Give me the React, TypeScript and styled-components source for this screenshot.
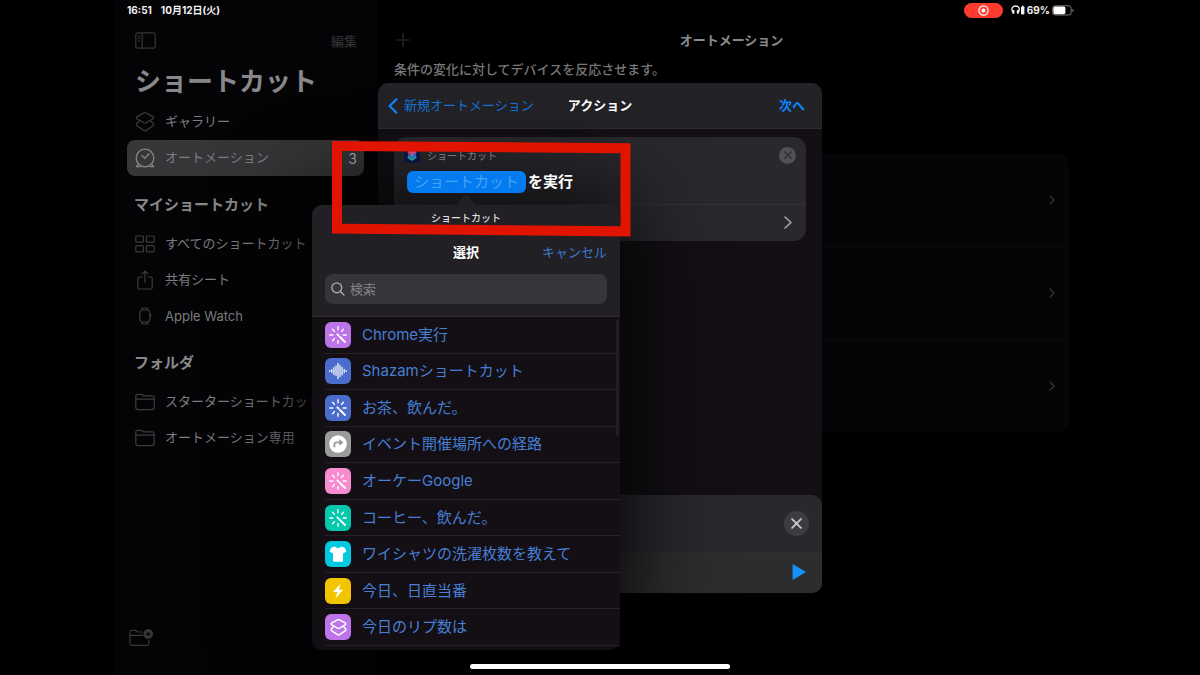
import React from "react";
import styled, { createGlobalStyle } from "styled-components";

const GlobalStyle = createGlobalStyle`
  *, *::before, *::after { box-sizing: border-box; }
  html, body { margin: 0; background: #000; }
  body, button, input {
    font-family: Inter, "Noto Sans CJK JP", sans-serif;
    -webkit-font-smoothing: antialiased;
  }
  button {
    border: 0;
    padding: 0;
    margin: 0;
    background: none;
    color: inherit;
    font-size: inherit;
    text-align: left;
    cursor: pointer;
  }
  h1, h2, p, ul { margin: 0; padding: 0; }
  ul { list-style: none; }
  svg { display: block; flex: none; }
`;

const Page = styled.div`
  position: relative;
  min-height: 100vh;
  display: flex;
  justify-content: center;
  overflow: hidden;
  background: #000;
`;

const Tablet = styled.div`
  width: 100%;
  max-width: 970px;
  display: grid;
  grid-template-columns: 263px 1fr;
  grid-template-rows: 20px 1fr;
`;

const StatusBar = styled.header`
  grid-column: 1 / -1;
  display: flex;
  align-items: center;
  gap: 9px;
  padding: 0 11px 0 12px;
  background: linear-gradient(90deg, #040406 263px, #000 263px);
  color: #f2f2f2;
  font-size: 10px;
  font-weight: 700;
  line-height: 20px;
`;

const StatusRight = styled.div`
  display: flex;
  align-items: center;
  gap: 2px;
  margin-left: auto;
`;

const RecordPill = styled.button`
  display: grid;
  place-items: center;
  width: 39px;
  height: 15px;
  margin-right: 6px;
  border-radius: 8px;
  background: #ff3b30;
`;

const Sidebar = styled.nav`
  display: flex;
  flex-direction: column;
  padding: 0 14px 28px 12px;
  background: #040406;
  color: #737375;
`;

const SidebarTop = styled.div`
  display: flex;
  align-items: center;
  justify-content: space-between;
  height: 40px;
  padding: 0 7px 0 8px;
  color: #363638;
  font-size: 13px;
`;

const AppTitle = styled.h1`
  padding-left: 8px;
  color: #88888a;
  font-size: 26px;
  font-weight: 700;
  line-height: 44px;
`;

const SectionTitle = styled.h2`
  padding: 8px 0 0 7px;
  color: #88888a;
  font-size: 15px;
  font-weight: 700;
  line-height: 42px;
`;

const Label = styled.span`
  padding-bottom: 3px;
`;

const SidebarItem = styled.button<{ $active?: boolean }>`
  display: flex;
  align-items: center;
  gap: 10px;
  width: 100%;
  height: 36px;
  padding: 0 7px 0 8px;
  border-radius: 8px;
  background: ${(p) => (p.$active ? "linear-gradient(90deg, #37373a, #343437)" : "none")};
  color: ${(p) => (p.$active ? "#7d7d80" : "#7c7c7e")};
  font-size: 13px;
  white-space: nowrap;
  overflow: hidden;

  svg { color: ${(p) => (p.$active ? "#88888a" : "#3c3c3f")}; }
`;

const Count = styled.span`
  margin-left: auto;
  color: #a9a9ac;
  font-size: 14px;
`;

const SidebarFooter = styled.button`
  margin: auto auto 0 2px;
  color: #39393c;
`;

const Main = styled.main`
  padding: 0 16px;
  color: #777779;
`;

const MainNav = styled.div`
  display: grid;
  grid-template-columns: 1fr auto 1fr;
  align-items: center;
  height: 40px;
  color: #2b2b2d;
`;

const AddButton = styled.button`
  padding-left: 2px;
`;

const MainTitle = styled.h2`
  padding-bottom: 2px;
  color: #8a8a8c;
  font-size: 13px;
  font-weight: 700;
`;

const Lead = styled.p`
  font-size: 13px;
  font-weight: 500;
  line-height: 18px;
`;

const AutomationList = styled.ul`
  margin-top: 76px;
  border-radius: 10px;
  background: #050507;
`;

const AutomationRow = styled.li`
  & + & { border-top: 1px solid #0b0b0d; }
`;

const AutomationButton = styled.button`
  display: flex;
  align-items: center;
  justify-content: flex-end;
  width: 100%;
  height: 92px;
  padding-right: 14px;
  color: #333336;
`;

const Overlay = styled.div`
  position: absolute;
  inset: 0;
  display: flex;
  justify-content: center;
  padding: 83px 0 82px;
`;

const Dialog = styled.section`
  position: relative;
  display: flex;
  flex-direction: column;
  width: 444px;
  border-radius: 10px;
  background: #130f14;
`;

const DialogHeader = styled.header`
  display: grid;
  grid-template-columns: 1fr auto 1fr;
  align-items: center;
  height: 46px;
  padding: 0 10px;
  border-radius: 10px 10px 0 0;
  border-bottom: 1px solid #2d2c31;
  background: #232227;
  color: #fff;
  font-size: 13px;
`;

const HeaderLink = styled.button<{ $end?: boolean }>`
  display: flex;
  align-items: center;
  gap: 6px;
  justify-self: ${(p) => (p.$end ? "end" : "start")};
  padding-right: 7px;
  color: ${(p) => (p.$end ? "#0a84ff" : "#1673d8")};
  font-size: 13px;
  font-weight: ${(p) => (p.$end ? 700 : 400)};
  white-space: nowrap;

  svg { color: #0a84ff; }
`;

const DialogTitle = styled.h2`
  padding-bottom: 3px;
  color: #fff;
  font-size: 13px;
  font-weight: 700;
`;

const DialogBody = styled.div`
  flex: 1;
  padding: 8px 16px;
`;

const ActionCard = styled.article`
  border-radius: 12px;
  background: #29282d;
`;

const ActionMain = styled.div`
  height: 68px;
  padding: 10px 10px 0;
  border-bottom: 1px solid #333237;
`;

const ActionHead = styled.div`
  display: flex;
  align-items: center;
  gap: 7px;
  height: 16px;
  color: #98989d;
  font-size: 10px;
`;

const RoundButton = styled.button<{ $large?: boolean }>`
  display: grid;
  place-items: center;
  width: ${(p) => (p.$large ? 25 : 17)}px;
  height: ${(p) => (p.$large ? 25 : 17)}px;
  margin-left: auto;
  border-radius: 50%;
  background: ${(p) => (p.$large ? "#3d3c40" : "#515054")};
  color: ${(p) => (p.$large ? "#c8c8ca" : "#262529")};
`;

const Sentence = styled.div`
  display: flex;
  align-items: center;
  gap: 2px;
  margin: 8px 0 0 3px;
  color: #fff;
  font-size: 15px;
  font-weight: 700;
  line-height: 22px;
`;

const SentenceText = styled.span`
  position: relative;
  z-index: 2;
`;

const TokenAnchor = styled.div`
  position: relative;
`;

const Token = styled.button`
  position: relative;
  z-index: 2;
  display: block;
  height: 22px;
  padding: 0 7px;
  border-radius: 6px;
  background: #057bf0;
  color: #45a4f5;
  font-size: 15px;
  line-height: 22px;
  white-space: nowrap;
`;

const ExpandRow = styled.button`
  display: flex;
  align-items: center;
  justify-content: flex-end;
  width: 100%;
  height: 36px;
  padding: 0 14px 2px 0;
  color: #a5a5a8;
`;

const Popover = styled.div`
  position: absolute;
  z-index: 1;
  top: calc(100% + 12px);
  right: -94px;
  left: -95px;
  border-radius: 10px;
  background: #130f14;
  box-shadow: 0 0 90px 10px rgba(0, 0, 0, 0.85);
  font-weight: 400;
`;

const PopoverArrow = styled.svg`
  position: absolute;
  bottom: 100%;
  left: 50%;
  transform: translateX(-50%);
`;

const PopoverHeader = styled.header`
  padding: 0 13px 12px;
  border-radius: 10px 10px 0 0;
  border-bottom: 1px solid #2d2c31;
  background: #222025;
`;

const PopoverTitle = styled.p`
  color: #dededf;
  font-size: 10px;
  font-weight: 500;
  line-height: 26px;
  text-align: center;
`;

const PopoverNav = styled.div`
  display: grid;
  grid-template-columns: 1fr auto 1fr;
  align-items: center;
  height: 43px;
  padding-bottom: 2px;
  color: #fff;
  font-size: 13px;
  font-weight: 700;
`;

const CancelButton = styled.button`
  grid-column: 3;
  justify-self: end;
  color: #3b78cc;
  font-size: 13px;
`;

const PopoverHeading = styled.span`
  grid-column: 2;
`;

const SearchField = styled.label`
  display: flex;
  align-items: center;
  gap: 5px;
  height: 30px;
  padding: 0 6px;
  border-radius: 8px;
  background: #36353b;
  color: #a9a9ad;
`;

const SearchInput = styled.input`
  flex: 1;
  min-width: 0;
  padding: 0 0 1px;
  border: 0;
  outline: 0;
  background: none;
  color: #fff;
  font-size: 13px;

  &::placeholder { color: #858489; opacity: 1; }
`;

const ShortcutList = styled.ul`
  position: relative;
  display: grid;
  grid-auto-rows: 1fr;
  height: 333px;
  padding: 0 0 4px 13px;
`;

const ShortcutRow = styled.li`
  display: flex;
  border-bottom: 1px solid #242227;
`;

const ShortcutButton = styled.button`
  display: flex;
  align-items: center;
  gap: 11px;
  width: 100%;
  color: #477fd4;
  font-size: 15px;
  white-space: nowrap;
`;

const Tile = styled.span<{ $color: string }>`
  display: grid;
  place-items: center;
  width: 26px;
  height: 26px;
  border-radius: 6px;
  background: ${(p) => p.$color};
  color: #fff;
`;

const ScrollThumb = styled.div`
  position: absolute;
  top: 2px;
  right: 1px;
  width: 3px;
  height: 117px;
  border-radius: 2px;
  background: #201e23;
`;

const Tray = styled.footer`
  border-radius: 10px;
  background: #29282d;
  overflow: hidden;
`;

const TrayTop = styled.div`
  display: flex;
  align-items: center;
  height: 57px;
  padding-right: 13px;
`;

const TrayBottom = styled.div`
  display: flex;
  align-items: center;
  justify-content: flex-end;
  height: 41px;
  padding: 0 16px 2px 0;
  border-top: 1px solid #2f2e31;
  background: #2d2d2f;
  color: #0a84ff;
`;

const Marker = styled.svg`
  position: absolute;
  z-index: 3;
  top: 58px;
  left: -46px;
  pointer-events: none;
`;

const HomeIndicator = styled.div`
  position: absolute;
  z-index: 4;
  bottom: 6px;
  left: 50%;
  width: 260px;
  height: 5px;
  border-radius: 3px;
  transform: translateX(-50%);
  background: #fff;
`;

const stroke = {
  fill: "none",
  stroke: "currentColor",
  strokeLinecap: "round" as const,
  strokeLinejoin: "round" as const,
};

const Chevron = ({ w, h, sw }: { w: number; h: number; sw: number }) => (
  <svg width={w} height={h} viewBox={`0 0 ${w} ${h}`} {...stroke} strokeWidth={sw}>
    <path d={`M1 1 L${w - 1} ${h / 2} L1 ${h - 1}`} />
  </svg>
);

const Cross = ({ size, sw }: { size: number; sw: number }) => (
  <svg width={size} height={size} viewBox="0 0 10 10" {...stroke} strokeWidth={sw}>
    <path d="M1 1 L9 9 M9 1 L1 9" />
  </svg>
);

const PanelIcon = () => (
  <svg width="21" height="17" viewBox="0 0 21 17" {...stroke} strokeWidth="1.2">
    <rect x="0.8" y="0.8" width="19.4" height="15.4" rx="2" />
    <path d="M7.2 1v15M3 4h1.8M3 6.5h1.8M3 9h1.8" />
  </svg>
);

const StackIcon = ({ size = 20, sw = 1.2 }: { size?: number; sw?: number }) => (
  <svg width={size} height={size} viewBox="0 0 20 20" {...stroke} strokeWidth={sw}>
    <path d="M8.8 1 Q10 0.4 11.2 1 L17.8 4.6 Q19.4 5.8 17.8 7 L11.2 10.8 Q10 11.4 8.8 10.8 L2.2 7 Q0.6 5.8 2.2 4.6 Z" />
    <path d="M4.6 8.6 L1.8 11.4 Q0.8 12.8 2.2 14 L8.8 18.4 Q10 19.2 11.2 18.4 L17.8 14 Q19.2 12.8 18.2 11.4 L15.4 8.6" />
  </svg>
);

const ClockIcon = () => (
  <svg width="20" height="20" viewBox="0 0 20 20" {...stroke} strokeWidth="1.3">
    <circle cx="10" cy="10" r="8.8" />
    <path d="M6.8 7.4 L9.8 10.4 L14 5.8M3.4 16.2 L1.4 18.6 H5M16.6 16.2 L18.6 18.6 H15" />
  </svg>
);

const GridIcon = () => (
  <svg width="20" height="18" viewBox="0 0 20 18" {...stroke} strokeWidth="1.2">
    <rect x="0.8" y="1" width="7.6" height="6.2" rx="1" />
    <rect x="11.4" y="1" width="7.8" height="6.2" rx="1" />
    <rect x="0.8" y="10.6" width="7.6" height="6.2" rx="1" />
    <rect x="11.4" y="10.6" width="7.8" height="6.2" rx="1" />
  </svg>
);

const ShareIcon = () => (
  <svg width="20" height="20" viewBox="0 0 20 20" {...stroke} strokeWidth="1.2">
    <path d="M7 7H4.4Q2.8 7 2.8 8.6V17.4Q2.8 19 4.4 19H15.6Q17.2 19 17.2 17.4V8.6Q17.2 7 15.6 7H13M10 12.6V1M7 3.8L10 0.8L13 3.8" />
  </svg>
);

const WatchIcon = () => (
  <svg width="20" height="20" viewBox="0 0 20 20" {...stroke} strokeWidth="1.2">
    <rect x="4.8" y="4" width="10" height="12" rx="3" />
    <path d="M6.6 3.8L7.2 2H12.4L13 3.8M6.6 16.2L7.2 18H12.4L13 16.2M15.6 8.4V10.4" />
  </svg>
);

const FolderIcon = () => (
  <svg width="20" height="18" viewBox="0 0 20 18" {...stroke} strokeWidth="1.2">
    <path d="M0.8 14.6V3.4Q0.8 1.4 2.8 1.4H6Q7 1.4 7.6 2L8.4 2.8H17.4Q19.2 2.8 19.2 4.6V14.6Q19.2 16.6 17.2 16.6H2.8Q0.8 16.6 0.8 14.6ZM0.8 6.2H19.2" />
  </svg>
);

const FolderPlusIcon = () => (
  <svg width="24" height="18" viewBox="0 0 24 18" {...stroke} strokeWidth="1.2">
    <path d="M13 3H8.6L7.6 2Q7 1.4 6 1.4H2.8Q1 1.4 1 3.2V14.6Q1 16.4 2.8 16.4H18Q19.8 16.4 19.8 14.6V11M1 6.4H13.6" />
    <circle cx="19.2" cy="5" r="4.2" fill="currentColor" />
    <path d="M19.2 3V7M17.2 5H21.2" stroke="#040406" />
  </svg>
);

const SearchIcon = () => (
  <svg width="14" height="14" viewBox="0 0 14 14" {...stroke} strokeWidth="1.4">
    <circle cx="5.8" cy="5.8" r="4.9" />
    <path d="M9.4 9.4L13 13" />
  </svg>
);

const HeadphonesIcon = () => (
  <svg width="14" height="10" viewBox="0 0 14 10">
    <path d="M1.4 6.6 C0 2.6 2 1 4.6 1 S9.2 2.6 7.8 6.6" fill="none" stroke="currentColor" strokeWidth="1.3" />
    <rect x="1.2" y="5" width="2.2" height="3.8" rx="0.8" fill="currentColor" />
    <rect x="5.8" y="5" width="2.2" height="3.8" rx="0.8" fill="currentColor" />
    <rect x="10" y="1.4" width="3.4" height="8" rx="0.8" fill="currentColor" />
    <rect x="11" y="0.6" width="1.4" height="1.2" fill="currentColor" />
  </svg>
);

const BatteryIcon = () => (
  <svg width="22" height="11" viewBox="0 0 22 11">
    <rect x="0.6" y="0.8" width="18.6" height="9.2" rx="2.6" fill="none" stroke="#7c7c7c" />
    <rect x="1.4" y="1.6" width="12" height="7.6" rx="1.6" fill="#fff" />
    <path d="M20.4 3.8Q21.6 4.4 21.6 5.4T20.4 7Z" fill="#7c7c7c" />
  </svg>
);

const AppIcon = () => (
  <svg width="16" height="16" viewBox="0 0 16 16">
    <rect width="16" height="16" rx="4" fill="#0c1c4c" />
    <path d="M8 7.2 L12.2 9.8 Q12.8 10.4 12.2 11 L8.6 13.6 Q8 14 7.4 13.6 L3.8 11 Q3.2 10.4 3.8 9.8Z" fill="#31c6b5" />
    <path d="M4 6.6 L8 9.8 L12.2 6.6 L12 9.4 L8 12 L4 9.4Z" fill="#3579ea" />
    <path d="M7.4 2.4 Q8 2 8.6 2.4 L12.2 4.8 Q12.8 5.4 12.2 6 L8.6 8.4 Q8 8.8 7.4 8.4 L3.8 6 Q3.2 5.4 3.8 4.8Z" fill="#f0506a" />
    <path d="M8 5.4L12.4 5.6L8.6 8.4Q8 8.8 7.4 8.4Z" fill="#b56ae0" />
  </svg>
);

const WandIcon = () => (
  <svg width="20" height="20" viewBox="0 0 20 20" {...stroke} strokeWidth="1.4">
    <path d="M10 1.8V4.8M4.6 4.2L6.4 6.4M15.4 4.2L13.6 6.4M1.8 10H4.8M15.2 10H18.2M4.6 15.8L6.4 13.6M10 15.4V18.2" />
    <path d="M9.4 9.4L10.6 10.6" strokeWidth="2" />
    <path d="M12 12L17 17" strokeWidth="1.9" />
  </svg>
);

const WaveIcon = () => (
  <svg width="20" height="20" viewBox="0 0 20 20" {...stroke} strokeWidth="1.2">
    <path d="M1.8 9.6V10.4M3.8 8.6V11.4M5.9 6.6V13.4M8 4.8V14.4M10 2.4V17.6M12 4.4V15.4M14.1 6.4V13.8M16.2 8.4V11.6M18.2 9.6V10.4" />
  </svg>
);

const RouteIcon = () => (
  <svg width="20" height="20" viewBox="0 0 20 20">
    <circle cx="10" cy="10" r="8.8" fill="#fff" />
    <path d="M6.4 13.2V10.4Q6.4 8.4 8.4 8.4H12.2" fill="none" stroke="#9b9b9b" strokeWidth="1.9" />
    <path d="M11.2 5L15.4 8.4L11.2 11.8Z" fill="#9b9b9b" />
  </svg>
);

const ShirtIcon = () => (
  <svg width="20" height="20" viewBox="0 0 20 20">
    <path d="M7 2.4Q10 6 13 2.4L15.8 3.2Q16.8 3.6 17.2 4.6L18.4 7.6L15 9.4V16.8Q15 17.8 14 17.8H6Q5 17.8 5 16.8V9.4L1.6 7.6L2.8 4.6Q3.2 3.6 4.2 3.2Z" fill="#fff" />
  </svg>
);

const BoltIcon = () => (
  <svg width="20" height="20" viewBox="0 0 20 20">
    <path d="M12.8 2.4L5 11H9.4L7.2 17.8L15.2 8.8H10.8Z" fill="#fff" />
  </svg>
);

const shortcuts = [
  { name: "Chrome実行", color: "#bd74e8", icon: <WandIcon /> },
  { name: "Shazamショートカット", color: "#4a6ccd", icon: <WaveIcon /> },
  { name: "お茶、飲んだ。", color: "#4a6ccd", icon: <WandIcon /> },
  { name: "イベント開催場所への経路", color: "#9b9b9b", icon: <RouteIcon /> },
  { name: "オーケーGoogle", color: "#f98bd0", icon: <WandIcon /> },
  { name: "コーヒー、飲んだ。", color: "#04c8ac", icon: <WandIcon /> },
  { name: "ワイシャツの洗濯枚数を教えて", color: "#02c8e0", icon: <ShirtIcon /> },
  { name: "今日、日直当番", color: "#f2c500", icon: <BoltIcon /> },
  { name: "今日のリプ数は", color: "#bd74e8", icon: <StackIcon size={17} sw={1.7} /> },
];

const ShortcutPicker = () => (
  <Popover role="dialog" aria-label="ショートカット">
    <PopoverArrow width="24" height="11" viewBox="0 0 24 11">
      <path d="M0 11 C5 11 8 1 12 1 S19 11 24 11Z" fill="#222025" />
    </PopoverArrow>
    <PopoverHeader>
      <PopoverTitle>ショートカット</PopoverTitle>
      <PopoverNav>
        <PopoverHeading>選択</PopoverHeading>
        <CancelButton>キャンセル</CancelButton>
      </PopoverNav>
      <SearchField>
        <SearchIcon />
        <SearchInput type="text" placeholder="検索" aria-label="検索" />
      </SearchField>
    </PopoverHeader>
    <ShortcutList>
      {shortcuts.map((s) => (
        <ShortcutRow key={s.name}>
          <ShortcutButton>
            <Tile $color={s.color}>{s.icon}</Tile>
            <Label>{s.name}</Label>
          </ShortcutButton>
        </ShortcutRow>
      ))}
      <ScrollThumb as="li" aria-hidden="true" />
    </ShortcutList>
  </Popover>
);

export default function App() {
  return (
    <Page>
      <GlobalStyle />
      <Tablet>
        <StatusBar>
          <span>16:51</span>
          <span>10月12日(火)</span>
          <StatusRight>
            <RecordPill aria-label="画面収録">
              <svg width="11" height="11" viewBox="0 0 11 11">
                <circle cx="5.5" cy="5.5" r="4.6" fill="none" stroke="#fff" strokeWidth="1.2" />
                <circle cx="5.5" cy="5.5" r="2" fill="#fff" />
              </svg>
            </RecordPill>
            <HeadphonesIcon />
            <span>69%</span>
            <BatteryIcon />
          </StatusRight>
        </StatusBar>

        <Sidebar>
          <SidebarTop>
            <button aria-label="サイドバー">
              <PanelIcon />
            </button>
            <button>編集</button>
          </SidebarTop>
          <AppTitle>ショートカット</AppTitle>
          <SidebarItem>
            <StackIcon />
            <Label>ギャラリー</Label>
          </SidebarItem>
          <SidebarItem $active aria-current="page">
            <ClockIcon />
            <Label>オートメーション</Label>
            <Count>3</Count>
          </SidebarItem>
          <SectionTitle>マイショートカット</SectionTitle>
          <SidebarItem>
            <GridIcon />
            <Label>すべてのショートカット</Label>
          </SidebarItem>
          <SidebarItem>
            <ShareIcon />
            <Label>共有シート</Label>
          </SidebarItem>
          <SidebarItem>
            <WatchIcon />
            <span>Apple Watch</span>
          </SidebarItem>
          <SectionTitle>フォルダ</SectionTitle>
          <SidebarItem>
            <FolderIcon />
            <Label>スターターショートカット</Label>
          </SidebarItem>
          <SidebarItem>
            <FolderIcon />
            <Label>オートメーション専用</Label>
          </SidebarItem>
          <SidebarFooter aria-label="新規フォルダ">
            <FolderPlusIcon />
          </SidebarFooter>
        </Sidebar>

        <Main>
          <MainNav>
            <AddButton aria-label="追加">
              <svg width="14" height="14" viewBox="0 0 14 14" {...stroke} strokeWidth="1.2">
                <path d="M7 0.6V13.4M0.6 7H13.4" />
              </svg>
            </AddButton>
            <MainTitle>オートメーション</MainTitle>
          </MainNav>
          <Lead>条件の変化に対してデバイスを反応させます。</Lead>
          <AutomationList>
            {[1, 2, 3].map((n) => (
              <AutomationRow key={n}>
                <AutomationButton aria-label={`オートメーション ${n}`}>
                  <Chevron w={6} h={10} sw={1.4} />
                </AutomationButton>
              </AutomationRow>
            ))}
          </AutomationList>
        </Main>
      </Tablet>

      <Overlay>
        <Dialog role="dialog" aria-label="アクション">
          <DialogHeader>
            <HeaderLink>
              <svg width="10" height="16" viewBox="0 0 10 16" {...stroke} strokeWidth="2.2">
                <path d="M8.4 1.4L1.6 8L8.4 14.6" />
              </svg>
              <Label>新規オートメーション</Label>
            </HeaderLink>
            <DialogTitle>アクション</DialogTitle>
            <HeaderLink $end>
              <Label>次へ</Label>
            </HeaderLink>
          </DialogHeader>
          <DialogBody>
            <ActionCard>
              <ActionMain>
                <ActionHead>
                  <AppIcon />
                  <span>ショートカット</span>
                  <RoundButton aria-label="削除">
                    <Cross size={8} sw={1.5} />
                  </RoundButton>
                </ActionHead>
                <Sentence>
                  <TokenAnchor>
                    <Token>ショートカット</Token>
                    <ShortcutPicker />
                  </TokenAnchor>
                  <SentenceText>を実行</SentenceText>
                </Sentence>
              </ActionMain>
              <ExpandRow aria-label="表示を増やす">
                <Chevron w={8} h={13} sw={1.6} />
              </ExpandRow>
            </ActionCard>
          </DialogBody>
          <Tray>
            <TrayTop>
              <RoundButton $large aria-label="閉じる">
                <Cross size={11} sw={1.7} />
              </RoundButton>
            </TrayTop>
            <TrayBottom>
              <button aria-label="実行">
                <svg width="14" height="16" viewBox="0 0 14 16">
                  <path d="M0.6 1.2Q0.6 0 1.6 0.6L13.2 7.4Q14 8 13.2 8.6L1.6 15.4Q0.6 16 0.6 14.8Z" fill="#1592f6" />
                </svg>
              </button>
            </TrayBottom>
          </Tray>
          <Marker width="300" height="96" viewBox="0 0 300 96">
            <path d="M0 0L298.5 2.2V95.5L0 92.5ZM10 10V82.8L288.5 85.2V12.2Z" fill="#e01400" fillRule="evenodd" />
          </Marker>
        </Dialog>
      </Overlay>
      <HomeIndicator />
    </Page>
  );
}
